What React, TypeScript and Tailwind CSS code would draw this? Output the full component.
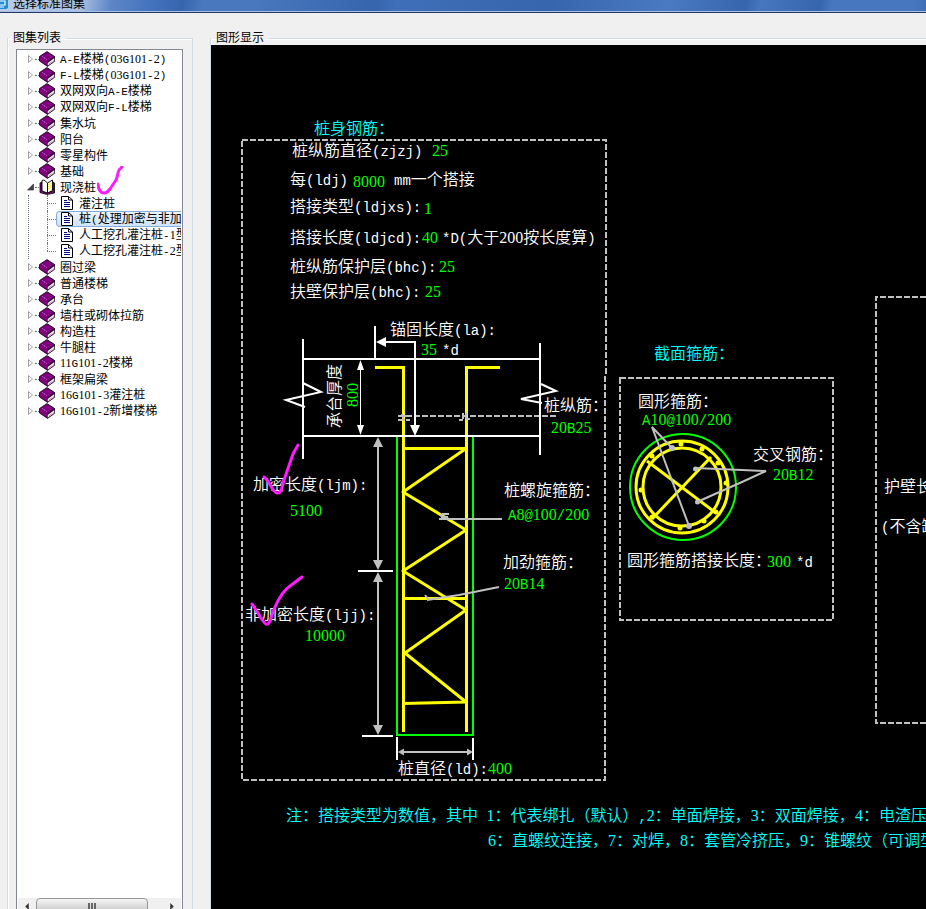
import type { ReactNode } from 'react';

const ORIGIN = { x: 211, y: 45 };

interface Label { x: number; y: number; text: string; color?: 'value' | 'title' }

const colors = {
  value: 'text-[#00ff00]',
  title: 'text-[#00ffff]',
  plain: 'text-white',
};

const labels: Label[] = [
  { x: 314, y: 129, text: '桩身钢筋：', color: 'title' },
  { x: 292, y: 151, text: '桩纵筋直径(zjzj)' },
  { x: 432, y: 151, text: '25', color: 'value' },
  { x: 290, y: 180, text: '每(ldj)' },
  { x: 353, y: 182, text: '8000', color: 'value' },
  { x: 394, y: 180, text: 'mm一个搭接' },
  { x: 290, y: 207, text: '搭接类型(ldjxs):' },
  { x: 424, y: 209, text: '1', color: 'value' },
  { x: 290, y: 238, text: '搭接长度(ldjcd):' },
  { x: 422, y: 238, text: '40', color: 'value' },
  { x: 442, y: 238, text: '*D(大于200按长度算)' },
  { x: 290, y: 267, text: '桩纵筋保护层(bhc):' },
  { x: 439, y: 267, text: '25', color: 'value' },
  { x: 290, y: 292, text: '扶壁保护层(bhc):' },
  { x: 425, y: 292, text: '25', color: 'value' },
  { x: 390, y: 330, text: '锚固长度(la):' },
  { x: 421, y: 350, text: '35', color: 'value' },
  { x: 442, y: 350, text: '*d' },
  { x: 544, y: 406, text: '桩纵筋：' },
  { x: 551, y: 428, text: '20B25', color: 'value' },
  { x: 504, y: 491, text: '桩螺旋箍筋：' },
  { x: 508, y: 515, text: 'A8@100/200', color: 'value' },
  { x: 503, y: 563, text: '加劲箍筋：' },
  { x: 504, y: 584, text: '20B14', color: 'value' },
  { x: 253, y: 485, text: '加密长度(ljm):' },
  { x: 290, y: 511, text: '5100', color: 'value' },
  { x: 245, y: 615, text: '非加密长度(ljj):' },
  { x: 305, y: 636, text: '10000', color: 'value' },
  { x: 398, y: 769, text: '桩直径(ld):' },
  { x: 488, y: 769, text: '400', color: 'value' },
  { x: 654, y: 354, text: '截面箍筋：', color: 'title' },
  { x: 638, y: 402, text: '圆形箍筋：' },
  { x: 642, y: 420, text: 'A10@100/200', color: 'value' },
  { x: 753, y: 455, text: '交叉钢筋：' },
  { x: 773, y: 475, text: '20B12', color: 'value' },
  { x: 627, y: 561, text: '圆形箍筋搭接长度：' },
  { x: 767, y: 562, text: '300', color: 'value' },
  { x: 796, y: 562, text: '*d' },
  { x: 884, y: 487, text: '护壁长' },
  { x: 881, y: 527, text: '(不含缺' },
  { x: 286, y: 816, text: '注：搭接类型为数值，其中 1：代表绑扎（默认）,2：单面焊接，3：双面焊接，4：电渣压', color: 'title' },
  { x: 488, y: 841, text: '6：直螺纹连接，7：对焊，8：套管冷挤压，9：锥螺纹（可调型', color: 'title' },
];

const topItems = ['A-E楼梯(03G101-2)', 'F-L楼梯(03G101-2)', '双网双向A-E楼梯', '双网双向F-L楼梯', '集水坑', '阳台', '零星构件', '基础'];
const children = ['灌注桩', '桩(处理加密与非加密)', '人工挖孔灌注桩-1型', '人工挖孔灌注桩-2型'];
const bottomItems = ['圈过梁', '普通楼梯', '承台', '墙柱或砌体拉筋', '构造柱', '牛腿柱', '11G101-2楼梯', '框架扁梁', '16G101-3灌注桩', '16G101-2新增楼梯'];

// Half-width runs get their own face so that two of them fill one CJK cell
function Mixed({ text, small }: { text: string; small?: boolean }) {
  const runs = text.match(/[0-9]+|[\x20-\x2f\x3a-\x7e]+|[^\x20-\x7e]+/g) ?? [];
  return (
    <>
      {runs.map((run, i) => {
        if (/^[0-9]/.test(run)) return <span key={i} className="font-['Liberation_Serif',serif]">{run}</span>;
        if (/^[\x20-\x7e]/.test(run)) {
          return (
            <span key={i} className={small ? "font-['Liberation_Mono',monospace] text-[11px]" : "font-['Liberation_Mono',monospace] text-[14px]"}>
              {run}
            </span>
          );
        }
        return run;
      })}
    </>
  );
}

function Book() {
  return (
    <svg viewBox="0 0 16 16" className="h-4 w-4 shrink-0">
      <path d="M.5 5.5 8 .6 15.600 5.5v4.800L8.500 15.400.5 10z" fill="#800080" stroke="#000" strokeWidth=".8" />
      <path d="M8.500 11 15.500 6" stroke="#000" />
      <path d="M8.800 11.900 15.200 7.200v2.800L8.800 14.600z" fill="#fff" />
      <path d="M9.500 13.200 15 9.200" stroke="#888" strokeWidth=".6" />
      <path d="M3.500 5.500 8 8.700" stroke="#e0b0e0" strokeWidth=".8" strokeDasharray="1 1" />
    </svg>
  );
}

function OpenBook() {
  return (
    <svg viewBox="0 0 16 16" className="h-4 w-4 shrink-0">
      <path d="M1 4 3 3v9l5 2 6-2V3l1.5 1v10L9 15.3H7L1 13.5z" fill="#800080" stroke="#000" strokeWidth=".8" />
      <path d="M3 1.5 5 1l3.5 3v10L3 12z" fill="#fff" stroke="#000" strokeWidth=".9" />
      <path d="M8.5 4 13.5 1v10.5l-5 2.5z" fill="#fffbd0" stroke="#000" strokeWidth=".9" />
      <path d="M10 5v6M12 4v6" stroke="#ffee00" strokeWidth="1.4" strokeDasharray="1 1" />
    </svg>
  );
}

function PageIcon() {
  return (
    <svg viewBox="0 0 12 14" className="h-[14px] w-3 shrink-0">
      <path d="M.5.5h7L11.5 4v9.5H.5z" fill="#fff" stroke="#000" />
      <path d="M7.5.5V4h4" fill="none" stroke="#000" />
      <path d="M3 4.5h3M3 6.5h6M3 8.5h6M3 10.5h6" stroke="#00008b" />
    </svg>
  );
}

function TreeRow({ text, open }: { text: string; open?: boolean }) {
  return (
    <button type="button" className="flex h-4 w-full items-center whitespace-nowrap pl-[9px]">
      <svg viewBox="0 0 8 10" className="h-[10px] w-2">
        {open
          ? <path d="M6.5 2v6h-6z" fill="#444" stroke="#222" strokeWidth=".6" />
          : <path d="M1.5 1.5 5.5 5l-4 3.5z" fill="#fff" stroke="#a0a0a0" />}
      </svg>
      <span className="w-1 border-t border-dotted border-gray-500" />
      {open ? <OpenBook /> : <Book />}
      <span className="pl-[5px]"><Mixed text={text} small /></span>
    </button>
  );
}

function Tree() {
  return (
    <ul className="overflow-hidden pt-px">
      {topItems.map(t => <li key={t}><TreeRow text={t} /></li>)}
      <li className="relative">
        <TreeRow text="现浇桩" open />
        <svg viewBox="98 166 28 30" className="absolute left-[79px] -top-[13px] h-[30px] w-7">
          <path d="M99 184c0 4 1 6 3 8 3 2 6 1 9-3l6-9c2-4 2-9 3-10l3-3" fill="none" stroke="#ff1aff" strokeWidth="3" strokeLinecap="round" />
        </svg>
        <ul className="ml-[10px] border-l border-dotted border-gray-500 pl-[18px]">
          {children.map((t, i) => (
            <li key={t} className="relative flex h-4 items-center">
              <span className={i === children.length - 1
                ? 'absolute left-0 top-0 h-2 border-l border-dotted border-gray-500'
                : 'absolute left-0 top-0 h-4 border-l border-dotted border-gray-500'} />
              <span className="w-[9px] shrink-0 border-t border-dotted border-gray-500" />
              <button
                type="button"
                className={i === 1
                  ? 'flex h-4 min-w-0 flex-1 items-center whitespace-nowrap rounded-l-sm border border-r-0 border-[#84acdd] bg-linear-to-b from-[#eef5fe] to-[#cfe3fc] pl-[4px]'
                  : 'flex h-4 min-w-0 flex-1 items-center whitespace-nowrap pl-[5px]'}
              >
                <PageIcon />
                <span className="pl-[6px]"><Mixed text={t} small /></span>
              </button>
            </li>
          ))}
        </ul>
      </li>
      {bottomItems.map(t => <li key={t}><TreeRow text={t} /></li>)}
    </ul>
  );
}

function ScrollBar() {
  return (
    <div className="mx-px flex h-[11px] shrink-0 items-start overflow-hidden bg-[#f0f0f0]">
      <button type="button" aria-label="向左" className="flex h-4 w-[18px] items-center justify-center">
        <svg viewBox="0 0 4 8" className="h-[7px] w-1"><path d="M4 0v8L0 4z" fill="#333" /></svg>
      </button>
      <div className="flex h-4 w-28 items-center justify-center gap-px rounded-sm border border-[#979797] bg-linear-to-b from-[#f5f5f5] to-[#c4c4c4]">
        <span className="h-[6px] w-[2px] bg-[#666]" />
        <span className="h-[6px] w-[2px] bg-[#666]" />
        <span className="h-[6px] w-[2px] bg-[#666]" />
      </div>
      <button type="button" aria-label="向右" className="ml-auto flex h-4 w-[18px] items-center justify-center">
        <svg viewBox="0 0 4 8" className="h-[7px] w-1"><path d="M0 0v8l4-4z" fill="#333" /></svg>
      </button>
    </div>
  );
}

const barDots = [[681, 444], [702, 449], [718, 463], [726, 483], [716, 512], [704, 521], [680, 528], [652, 517], [641, 490], [652, 456]];

function Drawing() {
  return (
    <svg viewBox="211 45 715 864" className="absolute left-0 top-0 h-[864px] w-[715px]" fill="none" strokeWidth="2">
      {/* dashed frames */}
      <g stroke="#c0c0c0" strokeDasharray="6 2">
        <path d="M242 140H606V376M605 376V780H242V140" />
        <path d="M620 378H833V620H620z" />
        <path d="M926 297H876V723H926" />
        <path d="M398 416H556" />
      </g>

      {/* pile wall */}
      <path d="M397 436V735H473V436" stroke="#00ff00" />

      {/* rebar */}
      <g stroke="#ffff00" strokeWidth="3">
        <path d="M375 367.500H403.500V732M500 367.500H466.500V732" />
        <path d="M403 448.500H466L403 492 466 530 403 571 466 610 405 653 466 702 403 703.500M403 598.500H466" strokeLinejoin="round" />
      </g>

      {/* pile cap */}
      <g stroke="#fff">
        <path d="M303 339V459M540 343V455M303 359H540M303 436H540M375 326V359" />
        <path d="M303 383 321 392 286 400 305 407M541 384 556 391 521 399 542 403" />
        <path d="M415 432V342H384" />
        <path d="M360.500 365V430" strokeWidth="1" />
        <path d="M358 571H393M362 736H393M397 737V760M473 738V760" />
      </g>
      <path d="M376 342 386 337V347zM415 436 410 425H420zM360.500 360 357 370H364zM360.500 435 357 425H364z" fill="#fff" />

      {/* dimension arrows */}
      <g stroke="#c0c0c0">
        <path d="M378 442V565M378 577V730M402 752H468" />
        <path d="M439 519H502M442 514H449M440 515 446 518M441 517H448M427 600 459 595 499 587M425 595 429 600" />
        <path d="M398 416H410M398 420H402M406 420H410M459 420H463M466 419H470M402 414 404 421M463 413V419M466 413V419" />
      </g>
      <path
        d="M378 437 373 447H383zM378 570 373 560H383zM378 572 373 582H383zM378 735 373 725H383zM398 752 404 748.500V755.500zM473 752 467 748.500V755.500z"
        fill="#c0c0c0"
      />

      {/* cross section */}
      <circle cx="683" cy="487" r="53" stroke="#00ff00" />
      <g stroke="#ffff00" strokeWidth="3">
        <circle cx="682" cy="487" r="46" />
        <circle cx="682" cy="487" r="39" />
        <path d="M647 461 716 513M711 457 652 519" />
      </g>
      {barDots.map(([x, y]) => <circle key={`${x}-${y}`} cx={x} cy={y} r="2.500" fill="#ffff00" />)}
      <g stroke="#c0c0c0">
        <path d="M672 448 652 427 689 526M695 468 742 470 766 471 742 482 697 502" />
      </g>
      <path d="M669 448a3 3 0 1 0 6 0a3 3 0 1 0-6 0M686 526a3 3 0 1 0 6 0a3 3 0 1 0-6 0M693 469a2 2 0 1 0 5 0a2 2 0 1 0-5 0M695 502a2 2 0 1 0 5 0a2 2 0 1 0-5 0" fill="#c0c0c0" />
    </svg>
  );
}

function Checks() {
  return (
    <svg viewBox="211 45 715 864" className="absolute left-0 top-0 h-[864px] w-[715px]" fill="none" stroke="#ff1aff" strokeWidth="3" strokeLinecap="round" strokeLinejoin="round">
      <path d="M264 477C270 481 272 492 277 493S282 486 284 480L293 454 298 445" />
      <path d="M252 604C257 610 262 622 266 624S271 616 275 607 284 590 290 586L302 577" />
    </svg>
  );
}

function GroupBox({ title, className, children }: { title: string; className: string; children: ReactNode }) {
  return (
    <fieldset className={`flex min-w-0 flex-col border border-b-0 border-[#d0dbe3] shadow-[inset_1px_1px_0_#fff] ${className}`}>
      <legend className="px-[5px] pb-[2px] text-xs leading-3">{title}</legend>
      {children}
    </fieldset>
  );
}

export default function App() {
  return (
    <div className="flex h-screen flex-col overflow-hidden bg-[#f0f0f0] font-['Noto_Sans_CJK_SC',sans-serif] text-black">
      <header className="flex h-[13px] shrink-0 items-end overflow-hidden border-b border-[#1f3a66] bg-[linear-gradient(100deg,#b9cbe6_0,#a9bfe2_80px,#5d86c6_110px,#4373bd_150px,#3765ad_180px,#4a78bf_200px,#4a78bf_250px,#3765ad_370px,#3f6fb8_390px,#3765ad_540px,#4a7ac1_660px,#3765ad_735px,#4677bf_750px,#3765ad_808px,#4677bf_820px,#4677bf_900px,#3765ad_926px)] shadow-[inset_0_-1px_0_#a9c0e2]">
        <svg viewBox="0 0 8 10" className="mb-[3px] h-[10px] w-2 shrink-0">
          <path d="M0 0h8v8.500L6.500 10H0z" fill="#1c8fdc" />
          <path d="M0 2h5v4H0M0 8h4" fill="none" stroke="#fff" strokeWidth="1.200" />
        </svg>
        <h1 className="mb-px pl-[5px] text-xs leading-4">选择标准图集</h1>
      </header>

      <main className="flex min-h-0 flex-1 gap-[17px] pl-[7px] pt-[18px]">
        <GroupBox title="图集列表" className="w-[186px] shrink-0">
          <div className="ml-2 mr-[9px] mt-1 flex min-h-0 flex-1 flex-col border border-b-0 border-[#828790] bg-white text-xs leading-4">
            <div className="min-h-0 flex-1 overflow-hidden px-px">
              <Tree />
            </div>
            <ScrollBar />
          </div>
        </GroupBox>

        <GroupBox title="图形显示" className="flex-1 border-r-0">
          <div className="relative min-h-0 flex-1 overflow-hidden bg-black text-base leading-5">
            <Drawing />
            {labels.map(l => (
              <span
                key={`${l.x}-${l.y}`}
                className={`absolute whitespace-pre font-[350] ${colors[l.color ?? 'plain']}`}
                style={{ left: l.x - ORIGIN.x, top: l.y - ORIGIN.y - 12 }}
              >
                <Mixed text={l.text} />
              </span>
            ))}
            <span className="absolute left-[122px] top-[351px] -translate-x-1/2 -translate-y-1/2 -rotate-90 whitespace-nowrap font-[350] text-white">承台厚度</span>
            <span className="absolute left-[142px] top-[350px] -translate-x-1/2 -translate-y-1/2 -rotate-90 font-['Liberation_Serif',serif] text-[#00ff00]">800</span>
            <Checks />
          </div>
        </GroupBox>
      </main>
    </div>
  );
}
